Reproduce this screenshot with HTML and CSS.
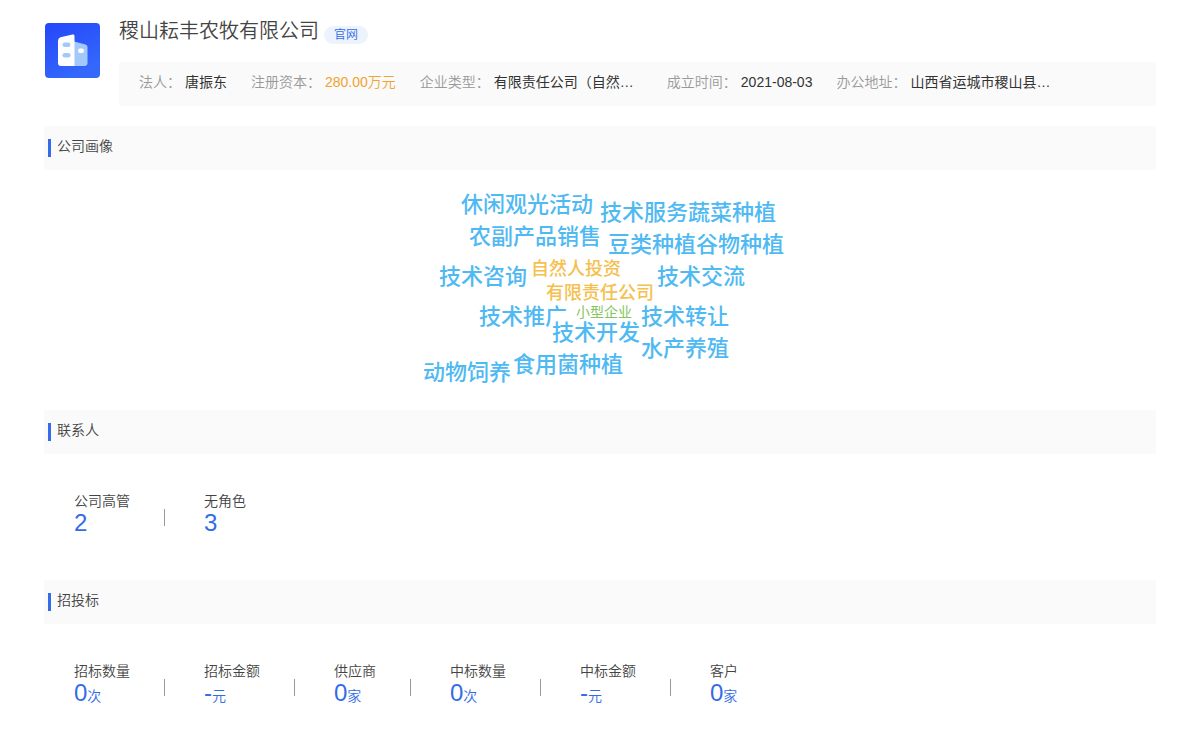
FILE: index.html
```html
<!DOCTYPE html>
<html lang="zh-CN">
<head>
<meta charset="utf-8">
<meta name="viewport" content="width=device-width, initial-scale=1">
<title>稷山耘丰农牧有限公司</title>
<link rel="stylesheet" href="styles.css">
</head>
<body>
<main class="page">
  <header class="company">
    <svg class="logo" viewBox="0 0 55 55" aria-hidden="true">
      <defs>
        <linearGradient id="logo-bg" x1="0" y1="0" x2="0.5" y2="1">
          <stop offset="0" stop-color="#2447fa"/>
          <stop offset="1" stop-color="#3468fb"/>
        </linearGradient>
      </defs>
      <rect width="55" height="55" rx="4" fill="url(#logo-bg)"/>
      <path d="M29 18.500L40.500 21.500Q42.500 22 42.500 24V40Q42.500 43 39.500 43H29Z" fill="#a3c8fb"/>
      <path d="M15.500 14.300L27.500 11.600Q29.500 11.300 29.500 13V43H16Q13 43 13 40V17.500Q13 15 15.500 14.300Z" fill="#fff"/>
      <rect x="17.500" y="19.500" width="8" height="4.500" rx="2.200" fill="#a3c8fb"/>
      <rect x="17.500" y="30" width="8" height="4.500" rx="2.200" fill="#a3c8fb"/>
      <rect x="33" y="25.500" width="6" height="4.500" rx="2" fill="#fff"/>
    </svg>
    <div class="company-main">
      <div class="title-row">
        <h1 class="title">稷山耘丰农牧有限公司</h1>
        <a class="site-tag" href="#">官网</a>
      </div>
      <dl class="info">
        <div class="info-item"><dt>法人：</dt><dd>唐振东</dd></div>
        <div class="info-item"><dt>注册资本：</dt><dd class="money">280.00万元</dd></div>
        <div class="info-item"><dt>企业类型：</dt><dd class="long">有限责任公司（自然…</dd></div>
        <div class="info-item"><dt>成立时间：</dt><dd>2021-08-03</dd></div>
        <div class="info-item"><dt>办公地址：</dt><dd class="long">山西省运城市稷山县…</dd></div>
      </dl>
    </div>
  </header>

  <section>
    <h2 class="section-title">公司画像</h2>
    <div class="cloud">
      <span class="word w1">休闲观光活动</span>
      <span class="word w2">技术服务蔬菜种植</span>
      <span class="word w3">农副产品销售</span>
      <span class="word w4">豆类种植谷物种植</span>
      <span class="word w5">技术咨询</span>
      <span class="word mid w6">自然人投资</span>
      <span class="word w7">技术交流</span>
      <span class="word mid w8">有限责任公司</span>
      <span class="word w9">技术推广</span>
      <span class="word small w10">小型企业</span>
      <span class="word w11">技术转让</span>
      <span class="word w12">技术开发</span>
      <span class="word w13">水产养殖</span>
      <span class="word w14">食用菌种植</span>
      <span class="word w15">动物饲养</span>
    </div>
  </section>

  <section>
    <h2 class="section-title">联系人</h2>
    <dl class="stats">
      <div class="stat"><dt>公司高管</dt><dd>2</dd></div>
      <div class="stat"><dt>无角色</dt><dd>3</dd></div>
    </dl>
  </section>

  <section>
    <h2 class="section-title">招投标</h2>
    <dl class="stats">
      <div class="stat"><dt>招标数量</dt><dd>0<small>次</small></dd></div>
      <div class="stat"><dt>招标金额</dt><dd>-<small>元</small></dd></div>
      <div class="stat"><dt>供应商</dt><dd>0<small>家</small></dd></div>
      <div class="stat"><dt>中标数量</dt><dd>0<small>次</small></dd></div>
      <div class="stat"><dt>中标金额</dt><dd>-<small>元</small></dd></div>
      <div class="stat"><dt>客户</dt><dd>0<small>家</small></dd></div>
    </dl>
  </section>
</main>
</body>
</html>
```
FILE: styles.css
```css
* { box-sizing: border-box; }

body {
  margin: 0;
  background: #fff;
  color: #444;
  font: 350 14px/20px "Liberation Sans", "Noto Sans CJK SC", sans-serif;
}

h1, h2, dl, dd { margin: 0; font-weight: inherit; }

.page { padding: 16px 44px; }

/* Company header */
.company { display: flex; gap: 19px; margin-bottom: 20px; }
.logo { width: 55px; height: 55px; margin: 7px 0 0 1px; flex: none; }
.company-main { flex: 1; min-width: 0; }
.title-row { display: flex; align-items: center; gap: 5px; height: 30px; margin-bottom: 16px; }
.title { font-size: 20px; line-height: 30px; }
.site-tag {
  padding: 0 10px;
  margin-top: 8px;
  border-radius: 9px;
  background: #ecf3fd;
  color: #336be8;
  font-size: 12px;
  line-height: 18px;
  text-decoration: none;
}
.info { display: flex; gap: 24px; padding: 10px 20px 14px; background: #fafafa; }
.info-item { display: flex; gap: 4px; white-space: nowrap; }
.info dt { color: #999; }
.info dd { color: #333; font-weight: 400; }
.info .money { color: #f0a32f; font-weight: 350; }
.info .long { width: 149px; }

/* Sections */
.section-title {
  display: flex;
  align-items: center;
  gap: 6px;
  height: 44px;
  padding: 0 4px 4px;
  background: #fafafa;
  font-size: 14px;
}
.section-title::before {
  content: "";
  width: 3px;
  height: 18px;
  margin-top: 4px;
  background: #336be8;
}

/* Tag cloud */
.cloud { position: relative; width: 400px; height: 240px; margin: 0 auto; }
.word { position: absolute; color: #4fb9f2; font-size: 22px; line-height: 24px; font-weight: 500; white-space: nowrap; }
.mid { color: #f5c04e; font-size: 18px; }
.small { color: #84c55f; font-size: 14px; font-weight: 400; }
.w1 { left: 61px; top: 23px; }
.w2 { left: 200px; top: 31px; }
.w3 { left: 69px; top: 55px; }
.w4 { left: 208px; top: 63px; }
.w5 { left: 39px; top: 95px; }
.w6 { left: 131px; top: 87px; }
.w7 { left: 257px; top: 95px; }
.w8 { left: 146px; top: 111px; }
.w9 { left: 79px; top: 135px; }
.w10 { left: 176px; top: 130px; }
.w11 { left: 241px; top: 135px; }
.w12 { left: 152px; top: 151px; }
.w13 { left: 241px; top: 167px; }
.w14 { left: 113px; top: 183px; }
.w15 { left: 23px; top: 191px; }

/* Counters */
.stats { display: flex; padding: 37px 30px 45px; }
.stat { display: flex; flex-direction: column; }
.stat + .stat {
  margin-left: 34px;
  padding-left: 39px;
  border-left: 1px solid transparent;
  background: linear-gradient(#999, #999) 0 18px / 1px 17px no-repeat border-box;
}
.stat dd { color: #336be8; font-size: 24px; line-height: 24px; white-space: nowrap; }
.stat small { font-size: 14px; }
```
